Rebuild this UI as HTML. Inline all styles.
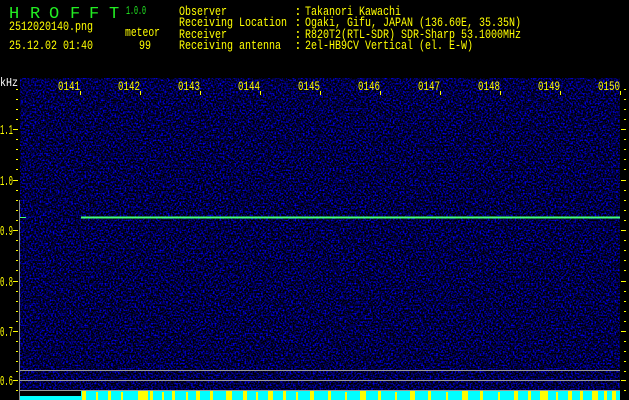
<!DOCTYPE html>
<html><head><meta charset="utf-8"><style>
html,body{margin:0;padding:0;background:#000;width:629px;height:400px;overflow:hidden}
svg{display:block}
text{font-family:"Liberation Mono",monospace}
</style></head><body>
<svg width="629" height="400" viewBox="0 0 629 400" xmlns="http://www.w3.org/2000/svg">
<defs>
<filter id="n" x="0" y="0" width="100%" height="100%" color-interpolation-filters="sRGB">
<feTurbulence type="fractalNoise" baseFrequency="0.6" numOctaves="1" seed="7" result="t"/>
<feColorMatrix in="t" type="matrix" values="0 0 0 0 0  0 0 0 0 0  3 0 0 0 -1.25  0 0 0 0 1"/>
</filter>
</defs>
<rect width="629" height="400" fill="#000"/>
<rect x="20" y="78" width="600" height="312" filter="url(#n)"/>
<line x1="19.5" y1="200" x2="19.5" y2="400" stroke="#888" stroke-width="1"/>
<line x1="20" y1="370.5" x2="620" y2="370.5" stroke="#999"/>
<line x1="20" y1="380.5" x2="620" y2="380.5" stroke="#999"/>
<line x1="20" y1="390.5" x2="620" y2="390.5" stroke="#999"/>
<line x1="81" y1="217.5" x2="620" y2="217.5" stroke="#44ff77" stroke-width="2"/>
<line x1="20" y1="217.5" x2="26" y2="217.5" stroke="#44ff77" stroke-width="1"/>
<rect x="20" y="391" width="600" height="9" fill="#00ffff"/>
<rect x="20" y="391" width="61" height="5" fill="#000"/>
<g fill="#ffff00">
<rect x="82" y="391" width="4" height="9"/><rect x="96" y="392" width="2" height="8"/><rect x="108" y="391" width="3" height="9"/><rect x="121" y="392" width="2" height="8"/><rect x="138" y="391" width="10" height="9"/><rect x="150" y="391" width="3" height="9"/><rect x="162" y="392" width="2" height="8"/><rect x="172" y="391" width="3" height="9"/><rect x="186" y="392" width="2" height="8"/><rect x="196" y="391" width="4" height="9"/><rect x="210" y="391" width="3" height="9"/><rect x="226" y="391" width="6" height="9"/><rect x="243" y="391" width="4" height="9"/><rect x="256" y="392" width="2" height="8"/><rect x="268" y="391" width="5" height="9"/><rect x="283" y="391" width="3" height="9"/><rect x="296" y="392" width="2" height="8"/><rect x="310" y="391" width="4" height="9"/><rect x="328" y="391" width="3" height="9"/><rect x="345" y="392" width="2" height="8"/><rect x="360" y="391" width="6" height="9"/><rect x="378" y="391" width="3" height="9"/><rect x="395" y="392" width="2" height="8"/><rect x="410" y="391" width="5" height="9"/><rect x="428" y="391" width="3" height="9"/><rect x="446" y="392" width="2" height="8"/><rect x="462" y="391" width="6" height="9"/><rect x="480" y="391" width="3" height="9"/><rect x="498" y="392" width="2" height="8"/><rect x="514" y="391" width="4" height="9"/><rect x="528" y="391" width="3" height="9"/><rect x="540" y="391" width="8" height="9"/><rect x="556" y="392" width="2" height="8"/><rect x="568" y="391" width="4" height="9"/><rect x="580" y="391" width="3" height="9"/><rect x="592" y="391" width="6" height="9"/><rect x="604" y="391" width="3" height="9"/><rect x="612" y="391" width="4" height="9"/>
</g>
<g fill="#22ee22" font-size="17" font-family="Liberation Sans"><text x="9" y="18">H</text><text x="30" y="18">R</text><text x="49" y="18">O</text><text x="70" y="18">F</text><text x="89" y="18">F</text><text x="109" y="18">T</text></g>
<text x="126" y="14" fill="#22ee22" font-size="12" textLength="20" lengthAdjust="spacingAndGlyphs">1.0.0</text>
<g fill="#ffff00" font-size="13">
<text x="9" y="30" textLength="84" lengthAdjust="spacingAndGlyphs">2512020140.png</text>
<text x="125" y="36" textLength="35" lengthAdjust="spacingAndGlyphs">meteor</text>
<text x="9" y="49" textLength="84" lengthAdjust="spacingAndGlyphs">25.12.02 01:40</text>
<text x="139" y="49" textLength="12" lengthAdjust="spacingAndGlyphs">99</text>
<text x="179" y="15" textLength="48" lengthAdjust="spacingAndGlyphs">Observer</text><text x="294" y="15">:</text><text x="305" y="15" textLength="96" lengthAdjust="spacingAndGlyphs">Takanori Kawachi</text>
<text x="179" y="26" textLength="108" lengthAdjust="spacingAndGlyphs">Receiving Location</text><text x="294" y="26">:</text><text x="305" y="26" textLength="216" lengthAdjust="spacingAndGlyphs">Ogaki, Gifu, JAPAN (136.60E, 35.35N)</text>
<text x="179" y="38" textLength="48" lengthAdjust="spacingAndGlyphs">Receiver</text><text x="294" y="38">:</text><text x="305" y="38" textLength="216" lengthAdjust="spacingAndGlyphs">R820T2(RTL-SDR) SDR-Sharp 53.1000MHz</text>
<text x="179" y="49" textLength="102" lengthAdjust="spacingAndGlyphs">Receiving antenna</text><text x="294" y="49">:</text><text x="305" y="49" textLength="168" lengthAdjust="spacingAndGlyphs">2el-HB9CV Vertical (el. E-W)</text>
</g>
<text x="0" y="86" fill="#fff" font-size="12" textLength="18" lengthAdjust="spacingAndGlyphs">kHz</text>
<g fill="#ffff00" font-size="13">
<text x="58" y="90" textLength="22" lengthAdjust="spacingAndGlyphs">0141</text><text x="118" y="90" textLength="22" lengthAdjust="spacingAndGlyphs">0142</text><text x="178" y="90" textLength="22" lengthAdjust="spacingAndGlyphs">0143</text><text x="238" y="90" textLength="22" lengthAdjust="spacingAndGlyphs">0144</text><text x="298" y="90" textLength="22" lengthAdjust="spacingAndGlyphs">0145</text><text x="358" y="90" textLength="22" lengthAdjust="spacingAndGlyphs">0146</text><text x="418" y="90" textLength="22" lengthAdjust="spacingAndGlyphs">0147</text><text x="478" y="90" textLength="22" lengthAdjust="spacingAndGlyphs">0148</text><text x="538" y="90" textLength="22" lengthAdjust="spacingAndGlyphs">0149</text><text x="598" y="90" textLength="22" lengthAdjust="spacingAndGlyphs">0150</text>
</g>
<g fill="#ffff00" font-size="14">
<text x="0" y="134" textLength="13" lengthAdjust="spacingAndGlyphs">1.1</text><text x="0" y="185" textLength="13" lengthAdjust="spacingAndGlyphs">1.0</text><text x="0" y="235" textLength="13" lengthAdjust="spacingAndGlyphs">0.9</text><text x="0" y="286" textLength="13" lengthAdjust="spacingAndGlyphs">0.8</text><text x="0" y="336" textLength="13" lengthAdjust="spacingAndGlyphs">0.7</text><text x="0" y="385" textLength="13" lengthAdjust="spacingAndGlyphs">0.6</text>
</g>
<g stroke="#ffff00" stroke-width="1">
<path d="M80.5 91v4M140.5 91v4M200.5 91v4M260.5 91v4M320.5 91v4M380.5 91v4M440.5 91v4M500.5 91v4M560.5 91v4M620.5 91v4"/>
</g>
<g fill="#ffff00" id="lt">
<rect x="16" y="89" width="2" height="1"/><rect x="16" y="99" width="2" height="1"/><rect x="16" y="109" width="2" height="1"/><rect x="16" y="119" width="2" height="1"/><rect x="16" y="139" width="2" height="1"/><rect x="16" y="149" width="2" height="1"/><rect x="16" y="159" width="2" height="1"/><rect x="16" y="169" width="2" height="1"/><rect x="16" y="190" width="2" height="1"/><rect x="16" y="200" width="2" height="1"/><rect x="16" y="210" width="2" height="1"/><rect x="16" y="220" width="2" height="1"/><rect x="16" y="240" width="2" height="1"/><rect x="16" y="250" width="2" height="1"/><rect x="16" y="260" width="2" height="1"/><rect x="16" y="270" width="2" height="1"/><rect x="16" y="291" width="2" height="1"/><rect x="16" y="301" width="2" height="1"/><rect x="16" y="311" width="2" height="1"/><rect x="16" y="321" width="2" height="1"/><rect x="16" y="341" width="2" height="1"/><rect x="16" y="351" width="2" height="1"/><rect x="16" y="361" width="2" height="1"/><rect x="16" y="371" width="2" height="1"/><rect x="16" y="390" width="2" height="1"/>
<rect x="13" y="129" width="5" height="1"/><rect x="13" y="180" width="5" height="1"/><rect x="13" y="230" width="5" height="1"/><rect x="13" y="281" width="5" height="1"/><rect x="13" y="331" width="5" height="1"/><rect x="13" y="380" width="5" height="1"/>
</g>
<use href="#lt" x="608"/>
</svg>
</body></html>
